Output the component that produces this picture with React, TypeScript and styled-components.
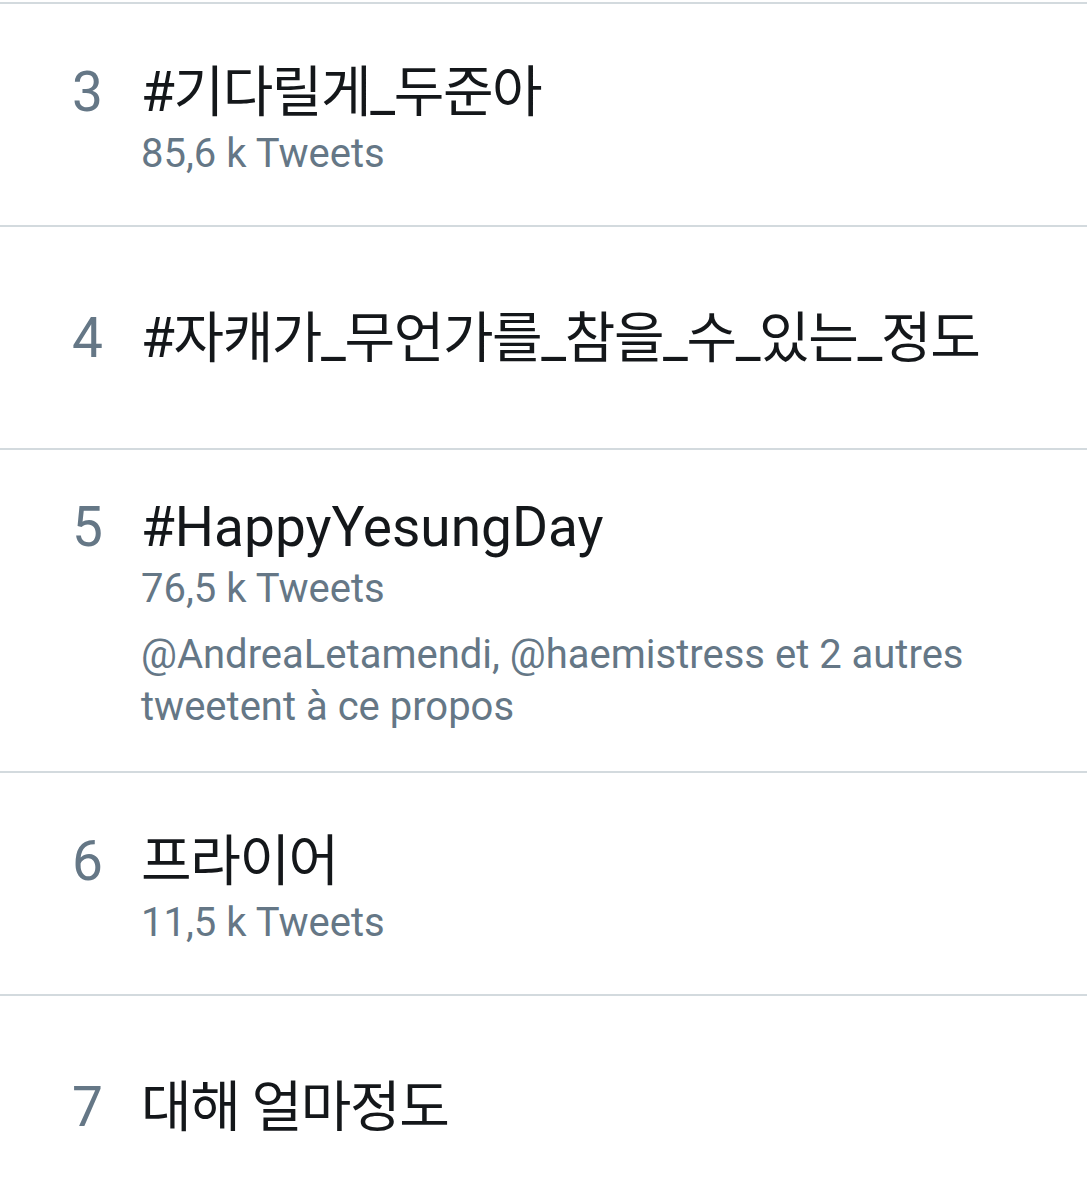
import styled, { createGlobalStyle } from "styled-components";

const GlobalStyle = createGlobalStyle`
  html, body {
    margin: 0;
    padding: 0;
    background: #ffffff;
  }
  body {
    font-family: Roboto, "Noto Sans CJK KR", sans-serif;
    -webkit-font-smoothing: antialiased;
  }
`;

const Container = styled.div`
  padding-top: 2px;
  background: #ffffff;
`;

const TrendList = styled.ul`
  list-style: none;
  margin: 0;
  padding: 0;
`;

const Trend = styled.li`
  box-sizing: border-box;
  min-height: 223px;
  border-top: 2px solid #d3dade;
  display: flex;
  flex-direction: column;
  justify-content: center;
  padding: 38px 40px 38px 72px;
`;

const Head = styled.div`
  display: flex;
  align-items: baseline;
`;

const Rank = styled.span`
  flex: 0 0 69px;
  font-size: 55px;
  line-height: 78px;
  color: #657786;
`;

const Name = styled.span<{ $korean?: boolean }>`
  font-size: 55px;
  line-height: 78px;
  color: #14171a;
  letter-spacing: ${(props) => (props.$korean ? "-1.4px" : "0")};
`;

const Meta = styled.div`
  padding-left: 69px;
  color: #657786;
  font-size: 40px;
`;

const Count = styled.div`
  line-height: 46px;
`;

const Context = styled.div`
  margin-top: 17px;
  line-height: 52px;
`;

// 트렌드 목록
interface TrendInterface {
  rank: number;
  name: string;
  korean?: boolean;
  count?: string;
  context?: string;
}

const trends: TrendInterface[] = [
  { rank: 3, name: "#기다릴게_두준아", korean: true, count: "85,6 k Tweets" },
  { rank: 4, name: "#자캐가_무언가를_참을_수_있는_정도", korean: true },
  {
    rank: 5,
    name: "#HappyYesungDay",
    count: "76,5 k Tweets",
    context: "@AndreaLetamendi, @haemistress et 2 autres tweetent à ce propos",
  },
  { rank: 6, name: "프라이어", korean: true, count: "11,5 k Tweets" },
  { rank: 7, name: "대해 얼마정도", korean: true },
];

function App() {
  return (
    <Container>
      <GlobalStyle />
      <TrendList>
        {trends.map((trend) => (
          <Trend key={trend.rank}>
            <Head>
              <Rank>{trend.rank}</Rank>
              <Name $korean={trend.korean}>{trend.name}</Name>
            </Head>
            {(trend.count || trend.context) && (
              <Meta>
                {trend.count && <Count>{trend.count}</Count>}
                {trend.context && <Context>{trend.context}</Context>}
              </Meta>
            )}
          </Trend>
        ))}
      </TrendList>
    </Container>
  );
}

export default App;
